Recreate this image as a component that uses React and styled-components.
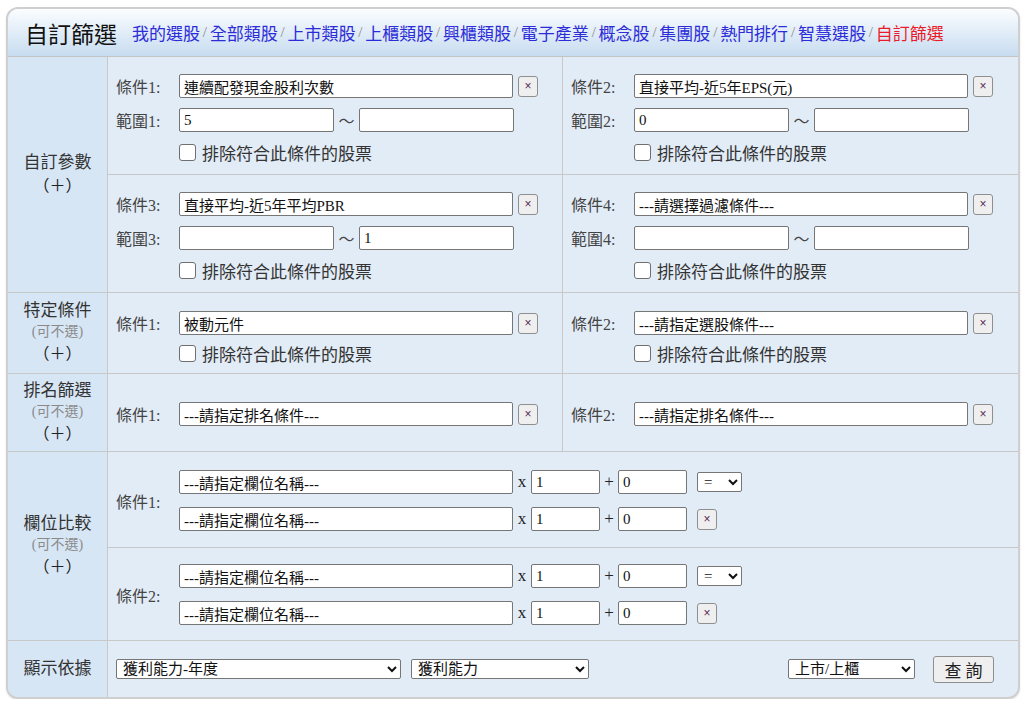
import React from 'react';
import styled, { createGlobalStyle } from 'styled-components';

const GlobalStyle = createGlobalStyle`
  body {
    margin: 0;
    background: #fff;
    font-family: "Liberation Serif", "Noto Sans CJK TC", serif;
    color: #222;
  }
`;

const Panel = styled.div`
  width: 1014px;
  margin: 7px 0 0 6px;
  box-sizing: border-box;
  border: 2px solid #cfcfcf;
  border-radius: 12px;
  overflow: hidden;
  background: #e2ecf7;
  box-shadow: 0 1px 2px rgba(0, 0, 0, 0.12);
`;

const Header = styled.div`
  height: 47px;
  display: flex;
  align-items: center;
  gap: 15px;
  padding-left: 17px;
  border-bottom: 1px solid #c4c4c4;
  background: linear-gradient(#fbfdff, #c7dcf0);
`;

const Title = styled.h1`
  margin: 0;
  font-size: 23px;
  font-weight: normal;
  color: #111;
`;

const Nav = styled.nav`
  display: flex;
  align-items: center;
  font-size: 17px;
`;

const NavLink = styled.a`
  color: ${p => (p.$active ? '#ea1c2a' : '#2c2cd8')};
  text-decoration: none;
`;

const Sep = styled.span`
  color: #8a8a8a;
  font-size: 15px;
  margin: 0 2.8px;
`;

const Row = styled.div`
  display: grid;
  grid-template-columns: 100px 1fr;
  border-bottom: ${p => (p.$last ? 'none' : '1px solid #c8c8c8')};
`;

const Side = styled.div`
  background: #d7e6f5;
  border-right: 1px solid #c8c8c8;
  display: flex;
  flex-direction: column;
  align-items: center;
  justify-content: center;
  font-size: 17px;
  color: #333;
  line-height: 22px;
`;

const SideNote = styled.span`
  font-size: 14px;
  color: #8a8a8a;
  line-height: 20px;
`;

const SidePlus = styled.span`
  font-size: 16px;
  color: #222;
  line-height: 24px;
`;

const Pair = styled.div`
  display: grid;
  grid-template-columns: 1fr 1fr;
`;

const Cell = styled.div`
  display: flex;
  flex-direction: column;
  gap: ${p => p.$gap || 10}px;
  padding: ${p => p.$pad};
  border-right: ${p => (p.$divider ? '1px solid #c8c8c8' : 'none')};
  border-bottom: ${p => (p.$bottom ? '1px solid #c8c8c8' : 'none')};
`;

const Line = styled.div`
  display: flex;
  align-items: center;
  height: 24px;
`;

const Label = styled.span`
  width: 63px;
  flex: none;
  font-size: 16px;
  color: #444;
`;

const TextBox = styled.input`
  width: ${p => p.$w}px;
  height: 24px;
  box-sizing: border-box;
  border: 1px solid #767676;
  border-radius: 2px;
  padding: 0 4px;
  margin: 0;
  font: 15px "Liberation Serif", "Noto Sans CJK TC", serif;
  color: #111;
  background: #fff;
`;

const ClearBtn = styled.button`
  width: 20px;
  height: 21px;
  margin: 0 0 0 ${p => (p.$gap != null ? p.$gap : 5)}px;
  padding: 0;
  border: 1px solid #8f8f8f;
  border-radius: 3px;
  background: #efefef;
  color: #5a2a5a;
  font: 12px "Liberation Sans", sans-serif;
  line-height: 19px;
`;

const Tilde = styled.span`
  width: 25px;
  text-align: center;
  font-size: 16px;
  color: #444;
`;

const CheckLine = styled.label`
  display: flex;
  align-items: center;
  gap: 6px;
  height: 20px;
  padding-left: 63px;
  font-size: 17px;
  color: #333;
`;

const Box = styled.input`
  appearance: none;
  -webkit-appearance: none;
  flex: none;
  width: 17px;
  height: 17px;
  box-sizing: border-box;
  margin: 0;
  border: 1px solid #6f6f6f;
  border-radius: 3px;
  background: #fff;
`;

const Op = styled.span`
  width: 18px;
  text-align: center;
  font-size: 17px;
  color: #222;
`;

const Stack = styled.div`
  display: flex;
  flex-direction: column;
  gap: 13px;
`;

const CompareBlock = styled.div`
  display: flex;
  align-items: center;
  padding: ${p => p.$pad};
  border-bottom: ${p => (p.$bottom ? '1px solid #c8c8c8' : 'none')};
`;

const Picker = styled.select`
  width: ${p => p.$w}px;
  height: 20px;
  margin: 0 0 0 ${p => p.$gap || 0}px;
  border: 1px solid #767676;
  border-radius: 2px;
  background: #fff;
  font: 15px "Liberation Serif", "Noto Sans CJK TC", serif;
  color: #111;
  padding: 0 2px;
`;

const Footer = styled.div`
  display: flex;
  align-items: center;
  height: 56px;
  padding: 0 24px 0 8px;
`;

const Spacer = styled.div`
  flex: 1;
`;

const Query = styled.button`
  width: 61px;
  height: 27px;
  margin-left: 18px;
  border: 1px solid #8f8f8f;
  border-radius: 3px;
  background: #efefef;
  font: 17px "Liberation Serif", "Noto Sans CJK TC", serif;
  color: #222;
  padding: 0;
`;

const links = ['我的選股', '全部類股', '上市類股', '上櫃類股', '興櫃類股', '電子產業', '概念股', '集團股', '熱門排行', '智慧選股', '自訂篩選'];

const Condition = ({ n, value, from, to, pad, divider, bottom }) => (
  <Cell $pad={pad} $divider={divider} $bottom={bottom}>
    <Line>
      <Label>條件{n}:</Label>
      <TextBox $w={334} defaultValue={value} readOnly />
      <ClearBtn>×</ClearBtn>
    </Line>
    <Line>
      <Label>範圍{n}:</Label>
      <TextBox $w={155} defaultValue={from} />
      <Tilde>～</Tilde>
      <TextBox $w={155} defaultValue={to} />
    </Line>
    <CheckLine>
      <Box type="checkbox" />
      排除符合此條件的股票
    </CheckLine>
  </Cell>
);

const CompareLine = ({ end }) => (
  <Line>
    <TextBox $w={334} defaultValue="---請指定欄位名稱---" readOnly />
    <Op>x</Op>
    <TextBox $w={69} defaultValue="1" />
    <Op>+</Op>
    <TextBox $w={69} defaultValue="0" />
    {end === 'select' ? (
      <Picker $w={45} $gap={10}>
        <option>=</option>
      </Picker>
    ) : (
      <ClearBtn $gap={10}>×</ClearBtn>
    )}
  </Line>
);

const Compare = ({ n, pad, bottom }) => (
  <CompareBlock $pad={pad} $bottom={bottom}>
    <Label>條件{n}:</Label>
    <Stack>
      <CompareLine end="select" />
      <CompareLine end="clear" />
    </Stack>
  </CompareBlock>
);

export default function App() {
  return (
    <>
      <GlobalStyle />
      <Panel>
        <Header>
          <Title>自訂篩選</Title>
          <Nav>
            {links.map((l, i) => (
              <React.Fragment key={l + i}>
                {i > 0 && <Sep>/</Sep>}
                <NavLink href="#" $active={i === links.length - 1}>{l}</NavLink>
              </React.Fragment>
            ))}
          </Nav>
        </Header>

        <Row>
          <Side>
            <span>自訂參數</span>
            <SidePlus>（＋）</SidePlus>
          </Side>
          <Pair>
            <Condition n={1} value="連續配發現金股利次數" from="5" to="" pad="17px 8px 12px" divider bottom />
            <Condition n={2} value="直接平均-近5年EPS(元)" from="0" to="" pad="17px 8px 12px" bottom />
            <Condition n={3} value="直接平均-近5年平均PBR" from="" to="1" pad="17px 8px 12px" divider />
            <Condition n={4} value="---請選擇過濾條件---" from="" to="" pad="17px 8px 12px" />
          </Pair>
        </Row>

        <Row>
          <Side>
            <span>特定條件</span>
            <SideNote>(可不選)</SideNote>
            <SidePlus>（＋）</SidePlus>
          </Side>
          <Pair>
            {[['1', '被動元件'], ['2', '---請指定選股條件---']].map(([n, v], i) => (
              <Cell key={n} $pad="18px 8px 10px" $gap={8} $divider={i === 0}>
                <Line>
                  <Label>條件{n}:</Label>
                  <TextBox $w={334} defaultValue={v} readOnly />
                  <ClearBtn>×</ClearBtn>
                </Line>
                <CheckLine>
                  <Box type="checkbox" />
                  排除符合此條件的股票
                </CheckLine>
              </Cell>
            ))}
          </Pair>
        </Row>

        <Row>
          <Side>
            <span>排名篩選</span>
            <SideNote>(可不選)</SideNote>
            <SidePlus>（＋）</SidePlus>
          </Side>
          <Pair>
            {['1', '2'].map((n, i) => (
              <Cell key={n} $pad="28px 8px 25px" $divider={i === 0}>
                <Line>
                  <Label>條件{n}:</Label>
                  <TextBox $w={334} defaultValue="---請指定排名條件---" readOnly />
                  <ClearBtn>×</ClearBtn>
                </Line>
              </Cell>
            ))}
          </Pair>
        </Row>

        <Row>
          <Side>
            <span>欄位比較</span>
            <SideNote>(可不選)</SideNote>
            <SidePlus>（＋）</SidePlus>
          </Side>
          <div>
            <Compare n={1} pad="18px 8px 16px" bottom />
            <Compare n={2} pad="16px 8px 15px" />
          </div>
        </Row>

        <Row $last>
          <Side>
            <span>顯示依據</span>
          </Side>
          <Footer>
            <Picker $w={285}>
              <option>獲利能力-年度</option>
            </Picker>
            <Picker $w={178} $gap={10}>
              <option>獲利能力</option>
            </Picker>
            <Spacer />
            <Picker $w={127}>
              <option>上市/上櫃</option>
            </Picker>
            <Query>查 詢</Query>
          </Footer>
        </Row>
      </Panel>
    </>
  );
}
